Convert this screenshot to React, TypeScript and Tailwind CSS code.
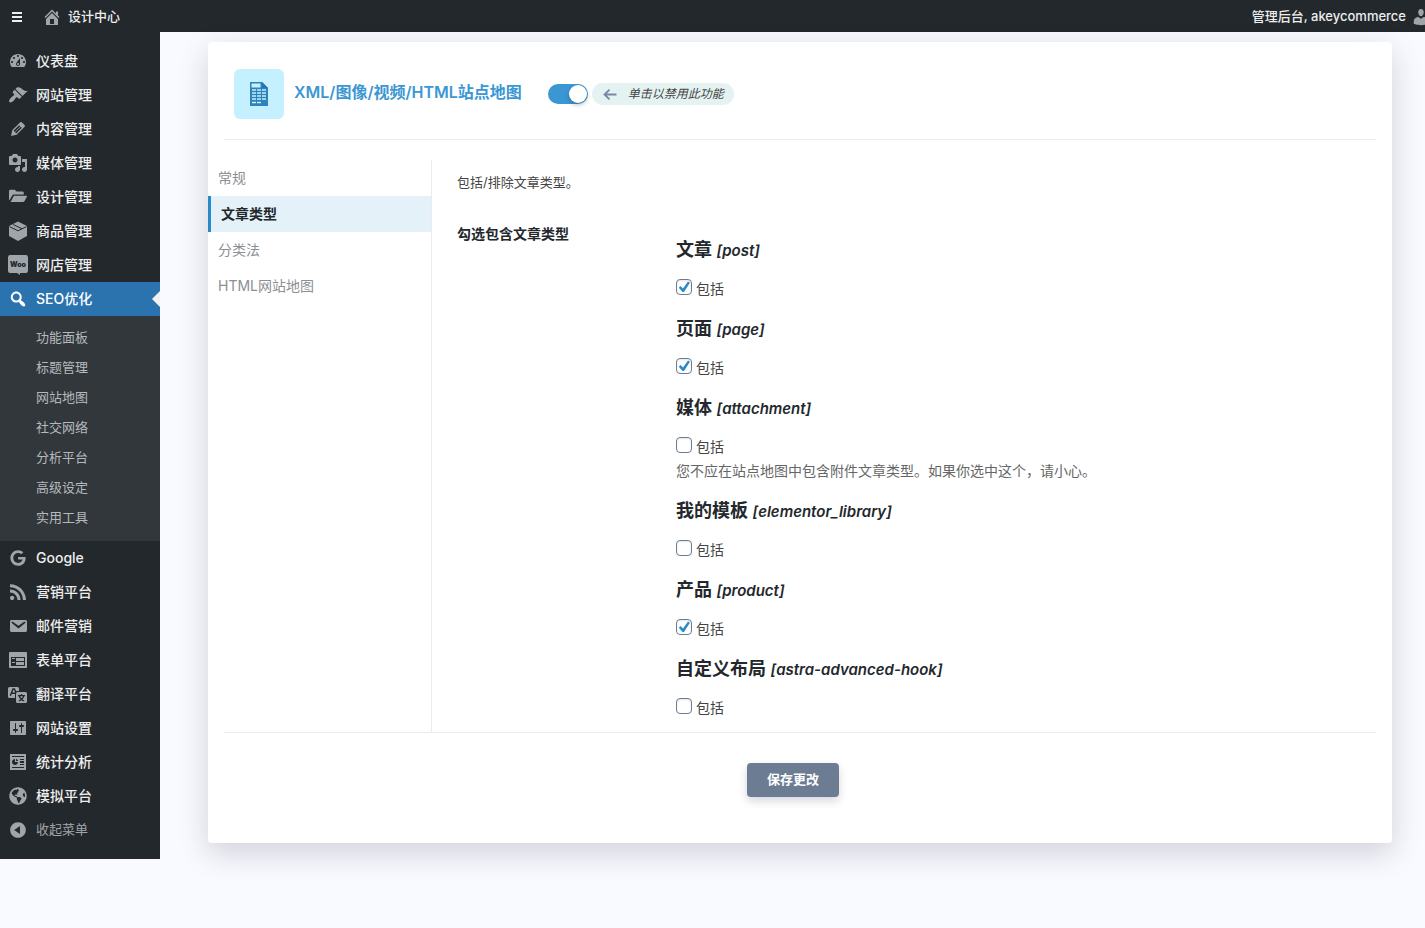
import React, { useState } from "react";
import { FaGlobeAmericas, FaGoogle } from "react-icons/fa";

const FONT = "font-['Inter','Noto_Sans_CJK_SC',sans-serif]";

const paths = {
  home: "M16 8.5l1.53 1.53-1.06 1.06L10 4.6l-6.47 6.49-1.06-1.06L10 2.5l4 4v-2h2v4zm-6-2.46l6 5.99V18H4v-5.97zM12 17v-5H8v5h4z",
  dashboard:
    "M3.76 16h12.48c1.1-1.37 1.76-3.11 1.76-5 0-4.42-3.58-8-8-8s-8 3.58-8 8c0 1.89.66 3.63 1.76 5zM10 4c.55 0 1 .45 1 1s-.45 1-1 1-1-.45-1-1 .45-1 1-1zM6 6c.55 0 1 .45 1 1s-.45 1-1 1-1-.45-1-1 .45-1 1-1zm8 0c.55 0 1 .45 1 1s-.45 1-1 1-1-.45-1-1 .45-1 1-1zm-5.37 5.55L12 7v6c0 1.1-.9 2-2 2s-2-.9-2-2c0-.57.24-1.08.63-1.45zM4 10c.55 0 1 .45 1 1s-.45 1-1 1-1-.45-1-1 .45-1 1-1zm12 0c.55 0 1 .45 1 1s-.45 1-1 1-1-.45-1-1 .45-1 1-1zm-5 3c0-.55-.45-1-1-1s-1 .45-1 1 .45 1 1 1 1-.45 1-1z",
  brush:
    "M14.48 11.06L7.41 3.99l1.5-1.5c.5-.56 2.3-.47 3.51.32 1.21.8 1.43 1.28 2.91 2.1 1.18.64 2.45 1.26 4.45.85zm-.71.71L6.7 4.7 4.93 6.47c-.39.39-.39 1.02 0 1.41l1.06 1.06c.39.39.39 1.03 0 1.42-.6.6-1.43 1.11-2.21 1.69-.35.26-.7.53-1.01.84C1.43 14.23.4 16.08 1.4 17.07c.99 1 2.84-.03 4.18-1.36.31-.31.58-.66.85-1.02.57-.78 1.08-1.61 1.69-2.21.39-.39 1.02-.39 1.41 0l1.06 1.06c.39.39 1.02.39 1.41 0z",
  pencil:
    "M13.89 3.39l2.71 2.72c.46.46.42 1.24.03 1.64l-8.01 8.02-5.56 1.16 1.16-5.58s7.6-7.63 7.99-8.03c.39-.39 1.22-.39 1.68.07zm-2.73 2.79l-5.59 5.61 1.11 1.11 5.54-5.65zm-2.97 8.23l5.58-5.6-1.07-1.08-5.59 5.6z",
  media:
    "M13 11V4c0-.55-.45-1-1-1h-1.67L9 1H5L3.67 3H2c-.55 0-1 .45-1 1v7c0 .55.45 1 1 1h10c.55 0 1-.45 1-1zM7 4.5c1.38 0 2.5 1.12 2.5 2.5S8.38 9.5 7 9.5 4.5 8.38 4.5 7 5.62 4.5 7 4.5zM14 6h5v10.5c0 1.38-1.12 2.5-2.5 2.5S14 17.88 14 16.5s1.12-2.5 2.5-2.5c.17 0 .34.02.5.05V9h-3V6zm-4 8.05V13h2v3.5c0 1.38-1.12 2.5-2.5 2.5S7 17.88 7 16.5 8.12 14 9.5 14c.17 0 .34.02.5.05z",
  folder:
    "M1 4.200C1 3.300 1.700 2.700 2.500 2.700h4.200l1.800 1.800h5.800c.8 0 1.500.6 1.500 1.400V7.500H6.200c-.9 0-1.700.4-2.100 1.200L1.500 13.300C1.200 13 1 12.600 1 12.200zM5.900 8.700H18.300c.6 0 .9.600.6 1.100l-2.500 4.500c-.3.500-.8.800-1.400.8H2.600z",
  search:
    "M12.14 4.18c1.87 1.87 2.11 4.75.72 6.89.12.1.22.21.36.31.2.16.47.36.81.59.34.24.56.39.66.47.42.31.73.57.94.78.32.32.6.65.84 1 .25.35.44.69.59 1.04.14.35.21.68.18 1-.02.32-.14.59-.36.81s-.49.34-.81.36c-.31.02-.65-.04-.99-.19-.35-.14-.7-.34-1.04-.59-.35-.24-.68-.52-1-.84-.21-.21-.47-.52-.77-.93-.1-.13-.25-.35-.47-.66-.22-.32-.4-.57-.56-.78-.16-.2-.29-.35-.44-.5-2.07 1.09-4.69.76-6.44-.98-2.14-2.15-2.14-5.64 0-7.78 2.15-2.15 5.63-2.15 7.78 0zm-1.41 6.36c1.36-1.37 1.36-3.58 0-4.95-1.37-1.37-3.59-1.37-4.95 0-1.37 1.37-1.37 3.58 0 4.95 1.36 1.37 3.58 1.37 4.95 0z",
  rss: "M14.92 18H18C18 9.32 10.82 2.25 2 2.25v3.02c7.12 0 12.92 5.71 12.92 12.73zm-5.44 0h3.08C12.56 12.27 7.82 7.6 2 7.6v3.02c2 0 3.87.77 5.29 2.16C8.7 14.17 9.48 16.03 9.48 18zm-5.35-.02c1.17 0 2.13-.93 2.13-2.09 0-1.15-.96-2.09-2.13-2.09-1.18 0-2.13.94-2.13 2.09 0 1.16.95 2.09 2.13 2.09z",
  email:
    "M3.87 4h13.25C18.37 4 19 4.59 19 5.79v8.42c0 1.19-.63 1.79-1.88 1.79H3.87c-1.25 0-1.88-.6-1.88-1.79V5.79c0-1.2.63-1.79 1.88-1.79zm6.62 8.6l6.74-5.53c.24-.2.43-.66.13-1.07-.29-.41-.82-.42-1.17-.17l-5.7 3.86L4.8 5.83c-.35-.25-.88-.24-1.17.17-.3.41-.11.87.13 1.07z",
  form: "M2 2h16c.55 0 1 .45 1 1v14c0 .55-.45 1-1 1H2c-.55 0-1-.45-1-1V3c0-.55.45-1 1-1zm15 14V7H3v9h14zM4 8v1h3V8H4zm4 0v3h8V8H8zm-4 4v1h3v-1H4zm4 0v3h8v-3H8z",
  settings:
    "M18 16V4c0-.55-.45-1-1-1H3c-.55 0-1 .45-1 1v12c0 .55.45 1 1 1h14c.55 0 1-.45 1-1zM8 11h1c.55 0 1 .45 1 1s-.45 1-1 1H8v1.5c0 .28-.22.5-.5.5s-.5-.22-.5-.5V13H6c-.55 0-1-.45-1-1s.45-1 1-1h1V5.5c0-.28.22-.5.5-.5s.5.22.5.5V11zm5-2h-1c-.55 0-1-.45-1-1s.45-1 1-1h1V5.5c0-.28.22-.5.5-.5s.5.22.5.5V7h1c.55 0 1 .45 1 1s-.45 1-1 1h-1v5.5c0 .28-.22.5-.5.5s-.5-.22-.5-.5V9z",
  analytics:
    "M18 18V2H2v16h16zM16 5H4V4h12v1zM7 7v3h3c0 1.66-1.34 3-3 3s-3-1.34-3-3 1.34-3 3-3zm1 2V7c1.1 0 2 .9 2 2H8zm8-1h-4V7h4v1zm0 3h-4V9h4v2zm0 2h-4v-1h4v1zm0 3H4v-1h12v1z",
  collapse:
    "M10 2.16c4.33 0 7.84 3.51 7.84 7.84s-3.51 7.84-7.84 7.84S2.16 14.33 2.16 10 5.71 2.16 10 2.16zm2 11.72V6.12L6.18 9.97z",
  user: "M10 9.25c-2.27 0-2.73-3.44-2.73-3.44C7 4.02 7.82 2 9.97 2c2.16 0 2.98 2.02 2.71 3.81 0 0-.41 3.44-2.68 3.44zm0 2.57L12.72 10c2.39 0 4.52 2.33 4.52 4.53v2.49s-3.65 1.13-7.24 1.13c-3.65 0-7.24-1.13-7.24-1.13v-2.49c0-2.25 1.94-4.48 4.47-4.48z",
};

function Dash({ name, className = "size-5" }: { name: keyof typeof paths; className?: string }) {
  return (
    <svg viewBox="0 0 20 20" className={`${className} shrink-0`} fill="currentColor" fillRule="evenodd" aria-hidden="true">
      <path d={paths[name]} />
    </svg>
  );
}

function BoxIcon() {
  return (
    <svg viewBox="0 0 20 20" className="size-5" aria-hidden="true">
      <path d="M10 .5l9 4.600v9.800L10 20l-9-5.100V5.100z" fill="currentColor" />
      <path d="M1.500 5.600L10 9.800l8.500-4.200M5.200 3.500l8.800 4.300" fill="none" stroke="#23282d" strokeWidth="1" />
    </svg>
  );
}

function WooIcon() {
  return (
    <svg viewBox="0 0 20 20" className="size-5" aria-hidden="true">
      <path d="M2.200 0h15.600A2.200 2.200 0 0 1 20 2.200v13.600a2.200 2.200 0 0 1-2.200 2.200H12v2l-3-2H2.200A2.200 2.200 0 0 1 0 15.800V2.200A2.200 2.200 0 0 1 2.200 0z" fill="currentColor" />
      <text x="10" y="12" textAnchor="middle" fontSize="7" fontWeight="900" fill="#23282d">
        Woo
      </text>
    </svg>
  );
}

function TranslateIcon() {
  return (
    <svg viewBox="0 0 20 20" className="size-5" aria-hidden="true">
      <path d="M1.500 3h8A1.500 1.500 0 0 1 11 4.500V7H9a2 2 0 0 0-2 2v5H1.500A1.500 1.500 0 0 1 0 12.500v-8A1.500 1.500 0 0 1 1.500 3z" fill="currentColor" />
      <path d="M2.300 11.800L5 5h1.400L8.200 9M3.300 9.300H7.300" fill="none" stroke="#23282d" strokeWidth="1.400" />
      <path d="M9.500 8h8A1.500 1.500 0 0 1 19 9.500v8a1.500 1.500 0 0 1-1.500 1.500h-8A1.500 1.500 0 0 1 8 17.500v-8A1.500 1.500 0 0 1 9.500 8z" fill="currentColor" />
      <path d="M10 11.700h7M13.500 10v1.700M11.200 12c.8 2.500 2.600 4.200 5 5M15.800 12c-.8 2.500-2.600 4.200-5 5" fill="none" stroke="#23282d" strokeWidth="1.200" />
    </svg>
  );
}

function SheetIcon() {
  return (
    <svg viewBox="0 0 18 24" className="w-[18px] h-6" aria-hidden="true">
      <path d="M0 0h12l6 6v18H0z" fill="#2f83bb" />
      <path d="M1.500 1.500h9v4h-9z" fill="#c4f0ff" />
      <path d="M12 0v6h6z" fill="#2874ad" />
      <path
        d="M2 8h4M7 8h4M12 8h4M2 11h4M7 11h4M12 11h4M2 14h4M7 14h4M12 14h4M2 17h4M7 17h4M12 17h4M2 20.500h4M7 20.500h4"
        stroke="#c4f0ff"
        strokeWidth="1.500"
      />
    </svg>
  );
}

const menuTop = [
  { label: "仪表盘", icon: <Dash name="dashboard" /> },
  { label: "网站管理", icon: <Dash name="brush" /> },
  { label: "内容管理", icon: <Dash name="pencil" /> },
  { label: "媒体管理", icon: <Dash name="media" /> },
  { label: "设计管理", icon: <Dash name="folder" /> },
  { label: "商品管理", icon: <BoxIcon /> },
  { label: "网店管理", icon: <WooIcon /> },
];

const subMenu = ["功能面板", "标题管理", "网站地图", "社交网络", "分析平台", "高级设定", "实用工具"];

const menuBottom = [
  { label: "Google", icon: <FaGoogle className="size-4" /> },
  { label: "营销平台", icon: <Dash name="rss" /> },
  { label: "邮件营销", icon: <Dash name="email" /> },
  { label: "表单平台", icon: <Dash name="form" /> },
  { label: "翻译平台", icon: <TranslateIcon /> },
  { label: "网站设置", icon: <Dash name="settings" /> },
  { label: "统计分析", icon: <Dash name="analytics" /> },
  { label: "模拟平台", icon: <FaGlobeAmericas className="size-[18px]" /> },
];

const tabs = ["常规", "文章类型", "分类法", "HTML网站地图"];

const postTypes = [
  { name: "文章", slug: "post", on: true },
  { name: "页面", slug: "page", on: true },
  { name: "媒体", slug: "attachment", on: false, note: "您不应在站点地图中包含附件文章类型。如果你选中这个，请小心。" },
  { name: "我的模板", slug: "elementor_library", on: false },
  { name: "产品", slug: "product", on: true },
  { name: "自定义布局", slug: "astra-advanced-hook", on: false },
];

function MenuItem({ label, icon }: { label: string; icon: React.ReactNode }) {
  return (
    <li>
      <a href="#" className="flex items-center h-[34px] px-2 gap-2 text-sm font-medium text-[#eeeeee]">
        <span className="flex items-center justify-center size-5 text-[#a0a5aa]">{icon}</span>
        {label}
      </a>
    </li>
  );
}

function TopBar() {
  return (
    <header className="flex items-center justify-between h-8 pt-px bg-[#23282d] text-[#eeeeee] text-[13px] font-medium overflow-hidden">
      <div className="flex items-center">
        <button type="button" aria-label="菜单" className="flex flex-col gap-[2px] ml-3 w-[10px]">
          <span className="h-[2px] bg-[#eeeeee]" />
          <span className="h-[2px] bg-[#eeeeee]" />
          <span className="h-[2px] bg-[#eeeeee]" />
        </button>
        <a href="#" className="flex items-center gap-[6px] ml-5">
          <Dash name="home" className="size-5 text-[#a0a5aa]" />
          设计中心
        </a>
      </div>
      <a href="#" className="flex items-center gap-[5px] -mr-[6px]">
        管理后台, akeycommerce
        <Dash name="user" className="size-5 text-[#a0a5aa]" />
      </a>
    </header>
  );
}

function Sidebar() {
  return (
    <nav className="w-40 shrink-0 py-3 bg-[#23282d]">
      <ul>
        {menuTop.map((item) => (
          <MenuItem key={item.label} {...item} />
        ))}
        <li>
          <a href="#" className="relative flex items-center h-[34px] px-2 gap-2 bg-[#2b73ae] text-sm font-medium text-white">
            <Dash name="search" />
            SEO优化
            <span className="absolute right-0 top-[9px] border-8 border-l-0 border-transparent border-r-[#f1f1f1]" />
          </a>
          <ul className="pt-[7px] pb-2 bg-[#32373c]">
            {subMenu.map((label) => (
              <li key={label}>
                <a href="#" className="flex items-center h-[30px] pl-9 text-[13px] text-[#b4b9be]">
                  {label}
                </a>
              </li>
            ))}
          </ul>
        </li>
        {menuBottom.map((item) => (
          <MenuItem key={item.label} {...item} />
        ))}
        <li>
          <button type="button" className="flex items-center h-[34px] px-2 gap-2 text-[13px] text-[#a0a5aa]">
            <Dash name="collapse" />
            收起菜单
          </button>
        </li>
      </ul>
    </nav>
  );
}

function PostType({ name, slug, on, note }: { name: string; slug: string; on: boolean; note?: string }) {
  return (
    <div>
      <h3 className="h-6 text-lg leading-6 font-semibold text-[#23282d]">
        {name} <em className="text-[15px]">[{slug}]</em>
      </h3>
      <label className="flex items-start w-fit h-6 mt-[15px] gap-1 text-sm leading-6 text-[#444444]">
        <span className="grid size-4 mt-[2px]">
          <input
            type="checkbox"
            defaultChecked={on}
            className="peer col-start-1 row-start-1 appearance-none size-4 rounded-[4px] border border-[#6b7c93] bg-white shadow-[inset_0_1px_2px_rgba(0,0,0,0.1)]"
          />
          <svg viewBox="0 0 16 16" className="hidden peer-checked:block col-start-1 row-start-1 size-4 pointer-events-none" aria-hidden="true">
            <path d="M12 2.600l1.900 1.200L8 13H6.500L2.800 8.700l1.700-1.700 2.500 2.400z" fill="#2a8ac6" />
          </svg>
        </span>
        包括
      </label>
      {note && <p className="text-sm leading-6 text-[#666666]">{note}</p>}
    </div>
  );
}

function App() {
  const [tab, setTab] = useState("文章类型");

  return (
    <div className={`${FONT} min-h-screen bg-[#f9faff] text-[#444444]`}>
      <TopBar />
      <div className="flex items-start">
        <Sidebar />
        <main className="flex-1 min-w-0 pt-[10px] pl-12 pr-[33px]">
          <form className="bg-white rounded pb-[46px] shadow-[0_10px_30px_rgba(30,30,50,0.18)]">
            <div className="flex items-center mx-4 pt-[27px] pb-5 pl-[10px] border-b border-[#ececec]">
              <div className="flex items-center justify-center size-[50px] rounded-md bg-[#c4f0ff]">
                <SheetIcon />
              </div>
              <h1 className="ml-[10px] pb-1 text-base font-semibold text-[#3b97d3]">XML/图像/视频/HTML站点地图</h1>
              <input
                id="feature"
                type="checkbox"
                role="switch"
                defaultChecked
                className="appearance-none flex items-center ml-[26px] w-10 h-5 rounded-full bg-[#3b97d3] before:block before:size-[18px] before:ml-[21px] before:rounded-full before:bg-white before:shadow-[0_2px_4px_rgba(0,0,0,0.25)]"
              />
              <label htmlFor="feature" className="flex items-center h-[22px] ml-1 pl-[11px] pr-[10px] gap-[11px] rounded-full bg-[#e4f3f2] text-xs italic text-[#444444]">
                <svg viewBox="0 0 14 12" className="w-[14px] h-3" fill="none" stroke="#7489a8" strokeWidth="1.800" aria-hidden="true">
                  <path d="M13.500 6.500H2M6.500 1.700L1.500 6.500l5 4.800" />
                </svg>
                单击以禁用此功能
              </label>
            </div>
            <div className="flex pt-5">
              <div className="w-56 shrink-0 border-r border-[#ececec]">
                {tabs.map((t) => (
                  <button
                    key={t}
                    type="button"
                    onClick={() => setTab(t)}
                    className={
                      t === tab
                        ? "flex items-center w-full h-9 pl-[10px] border-l-[3px] border-[#2a8ac6] bg-[#e4f1f8] text-sm font-semibold text-[#23282d]"
                        : "flex items-center w-full h-9 pl-[10px] text-sm text-[#8c8f94]"
                    }
                  >
                    {t}
                  </button>
                ))}
              </div>
              <div className="flex-1 min-w-0 py-3 pl-[25px]">
                <p className="text-[13px] leading-5">包括/排除文章类型。</p>
                <div className="flex mt-8">
                  <h2 className="w-[219px] shrink-0 text-sm leading-5 font-semibold text-[#23282d]">勾选包含文章类型</h2>
                  <div className="flex flex-col gap-4 pt-[14px]">
                    {postTypes.map((type) => (
                      <PostType key={type.slug} {...type} />
                    ))}
                  </div>
                </div>
              </div>
            </div>
            <div className="flex justify-center mx-4 pt-[30px] pr-[14px] border-t border-[#ececec]">
              <button type="submit" className="h-[34px] px-5 rounded-[4px] bg-[#6b7c93] text-[13px] font-bold text-white shadow-[0_4px_8px_rgba(50,50,93,0.2)]">
                保存更改
              </button>
            </div>
          </form>
        </main>
      </div>
    </div>
  );
}

export default App;
